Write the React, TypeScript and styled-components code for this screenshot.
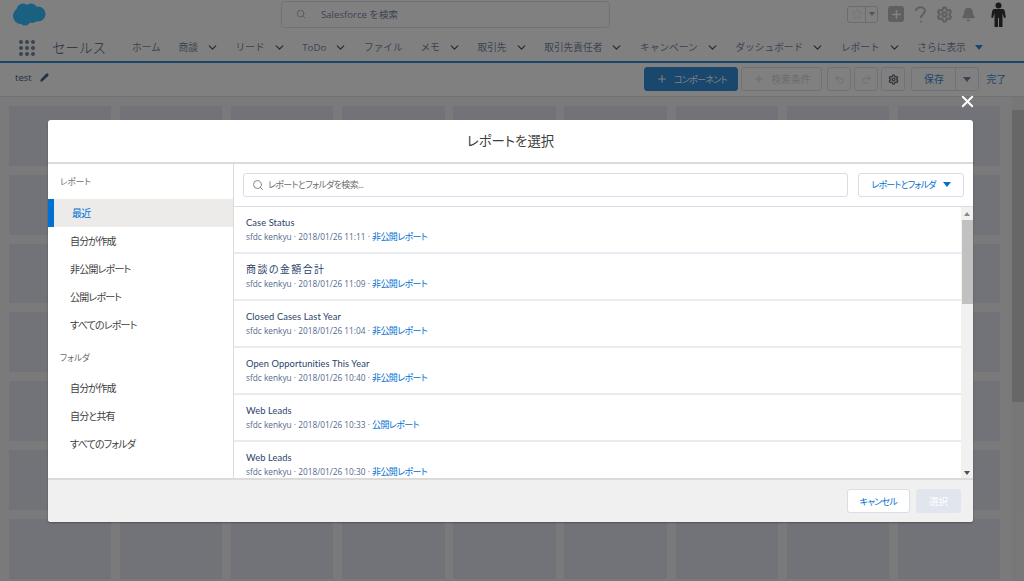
import React from 'react';
import styled, { createGlobalStyle } from 'styled-components';
import { Search, Pencil, Plus, Undo2, Redo2, Settings, ChevronDown, Bell, Star, X } from 'lucide-react';

const FONT = `"Open Sans", "Noto Sans CJK JP", sans-serif`;

const GlobalStyle = createGlobalStyle`
  html, body { margin: 0; padding: 0; }
  body { width: 1024px; height: 581px; overflow: hidden; font-family: ${FONT}; background: #fff; }
  * { box-sizing: border-box; }
`;

const Page = styled.div`
  position: relative;
  width: 1024px;
  height: 581px;
  overflow: hidden;
  display: flex;
  flex-direction: column;
`;

const TopBar = styled.header`
  height: 30px;
  display: flex;
  align-items: center;
  padding: 0 18px 0 12px;
  flex-shrink: 0;
`;

const Logo = styled.svg`
  width: 34px;
  height: 24px;
  margin-top: -2px;
  flex-shrink: 0;
`;

const GlobalSearch = styled.div`
  margin-left: 235px;
  margin-top: -2px;
  width: 329px;
  height: 27px;
  border: 1px solid #d8dde6;
  border-radius: 4px;
  display: flex;
  align-items: center;
  padding-left: 14px;
  gap: 15px;
  font-size: 9.6px;
  color: #54698d;
  background: #fff;
`;

const TopIcons = styled.div`
  margin-left: auto;
  display: flex;
  align-items: center;
  margin-top: -2px;
`;

const Favorite = styled.div`
  width: 31px;
  height: 17px;
  border: 1px solid #c6ccd6;
  border-radius: 3px;
  display: flex;
  align-items: center;
  color: #d8dde6;
  margin-right: 10px;
`;

const FavoriteStar = styled.div`
  width: 18px;
  height: 100%;
  border-right: 1px solid #c6ccd6;
  display: flex;
  align-items: center;
  justify-content: center;
`;

const FavoriteArrow = styled.div`
  flex: 1;
  display: flex;
  justify-content: center;
`;

const Triangle = styled.span<{ $size?: number; $color?: string }>`
  display: inline-block;
  width: 0;
  height: 0;
  flex-shrink: 0;
  border-left: ${p => p.$size ?? 4}px solid transparent;
  border-right: ${p => p.$size ?? 4}px solid transparent;
  border-top: ${p => (p.$size ?? 4) + 1}px solid ${p => p.$color ?? '#6f7f95'};
`;

const TriangleUp = styled.span`
  display: inline-block;
  width: 0;
  height: 0;
  border-left: 3px solid transparent;
  border-right: 3px solid transparent;
  border-bottom: 4px solid #8a8a8a;
`;

const PlusSquare = styled.div`
  width: 16px;
  height: 16px;
  border-radius: 3px;
  background: #b0adab;
  color: #fff;
  display: flex;
  align-items: center;
  justify-content: center;
  margin-right: 10px;
`;

const IconSlot = styled.div<{ $gap: number }>`
  display: flex;
  color: #b0adab;
  margin-right: ${p => p.$gap}px;
`;

const NavBar = styled.nav`
  height: 33px;
  display: flex;
  align-items: center;
  padding: 3px 0 0 19px;
  border-bottom: 2px solid #0070d2;
  flex-shrink: 0;
`;

const Waffle = styled.div`
  display: grid;
  grid-template-columns: repeat(3, 4px);
  grid-auto-rows: 4px;
  gap: 2px;
  margin-right: 17px;
  margin-top: 1px;
`;

const Dot = styled.span`
  border-radius: 50%;
  background: #54698d;
`;

const AppName = styled.div`
  font-size: 13.5px;
  width: 80px;
  color: #16325c;
  white-space: nowrap;
  font-weight: 300;
`;

const NavList = styled.div`
  display: flex;
  align-items: center;
  gap: 17.7px;
`;

const NavItem = styled.div`
  display: flex;
  align-items: center;
  gap: 9px;
  font-size: 9.7px;
  color: #54698d;
  white-space: nowrap;
`;

const Chevron = styled(ChevronDown)`
  width: 13px;
  height: 13px;
  margin: 0 -1px;
  color: #16325c;
`;

const ToolBar = styled.div`
  height: 34px;
  display: flex;
  align-items: center;
  padding: 0 18px 0 15px;
  border-bottom: 1px solid #d8dde6;
  flex-shrink: 0;
`;

const PageName = styled.div`
  display: flex;
  align-items: center;
  gap: 8px;
  font-size: 9.5px;
  color: #16325c;
  margin-top: -4px;
`;

const Actions = styled.div`
  margin-left: auto;
  display: flex;
  align-items: center;
  color: #0070d2;
  font-size: 9.8px;
  font-feature-settings: 'palt';
  margin-top: -1px;
`;

const ToolButton = styled.div<{ $w: number; $gap?: number; $primary?: boolean; $muted?: boolean }>`
  width: ${p => p.$w}px;
  height: 24px;
  margin-right: ${p => p.$gap ?? 3}px;
  border-radius: 3px;
  display: flex;
  align-items: center;
  justify-content: center;
  gap: 6px;
  white-space: nowrap;
  font-size: ${p => (p.$primary ? '9px' : 'inherit')};
  letter-spacing: ${p => (p.$primary ? '-0.65px' : '0')};
  border: 1px solid ${p => (p.$primary ? '#0070d2' : '#d8dde6')};
  background: ${p => (p.$primary ? '#0070d2' : '#fff')};
  color: ${p => (p.$primary ? '#fff' : p.$muted ? '#c9cfd8' : '#0070d2')};
`;

const SaveGroup = styled.div`
  display: flex;
  width: 68px;
  height: 24px;
  border: 1px solid #d8dde6;
  border-radius: 3px;
  margin: 0 7px 0 3px;
`;

const SaveLabel = styled.div`
  width: 44px;
  border-right: 1px solid #d8dde6;
  display: flex;
  align-items: center;
  justify-content: center;
`;

const SaveArrow = styled.div`
  flex: 1;
  display: flex;
  align-items: center;
  justify-content: center;
`;

const Canvas = styled.main`
  flex: 1;
  min-height: 0;
  display: flex;
  background: #f0f0f0;
`;

const Board = styled.div`
  flex: 1;
  overflow: hidden;
  display: grid;
  grid-template-columns: repeat(9, 102.3px);
  grid-auto-rows: 59.8px;
  column-gap: 8.8px;
  row-gap: 9px;
  padding: 9px 0 0 9px;
`;

const BoardCell = styled.div`
  background: #dcdfea;
`;

const PageScrollbar = styled.div`
  width: 12px;
  flex-shrink: 0;
  background: #e9e9e9;
  display: flex;
  flex-direction: column;
  align-items: center;
`;

const PageThumb = styled.div`
  width: 12px;
  height: 292px;
  margin-top: 13px;
  background: #c1c1c1;
`;

const Backdrop = styled.div`
  position: absolute;
  inset: 0;
  background: rgba(44, 44, 44, 0.6);
  padding: 120px 51px 59px 48px;
`;

const Modal = styled.section`
  position: relative;
  height: 402px;
  background: #fff;
  border-radius: 3px;
  display: flex;
  flex-direction: column;
  box-shadow: 0 1px 2px rgba(0, 0, 0, 0.3);
  font-feature-settings: 'palt';
`;

const CloseButton = styled.div`
  position: absolute;
  top: -28px;
  right: -4px;
  color: #fff;
  display: flex;
`;

const ModalTitle = styled.h2`
  margin: 0;
  height: 44px;
  padding-bottom: 2px;
  flex-shrink: 0;
  display: flex;
  align-items: center;
  justify-content: center;
  font-size: 13.4px;
  font-weight: 400;
  color: #3e3e3c;
  border-bottom: 2px solid #dddbda;
`;

const ModalBody = styled.div`
  flex: 1;
  min-height: 0;
  display: flex;
`;

const Sidebar = styled.aside`
  width: 186px;
  flex-shrink: 0;
  border-right: 1px solid #dddbda;
  padding-top: 11px;
`;

const SideHeading = styled.div<{ $top?: number; $bottom: number }>`
  font-size: 8.6px;
  line-height: 14px;
  padding-left: 12px;
  color: #706e6b;
  margin-top: ${p => p.$top ?? 0}px;
  margin-bottom: ${p => p.$bottom}px;
`;

const SideItem = styled.div<{ $active?: boolean }>`
  height: 28px;
  display: flex;
  align-items: center;
  padding-bottom: 1px;
  font-size: 10px;
  letter-spacing: -0.8px;
  padding-left: ${p => (p.$active ? 18 : 22)}px;
  color: ${p => (p.$active ? '#0070d2' : '#3e3e3c')};
  background: ${p => (p.$active ? '#ecebea' : 'transparent')};
  border-left: ${p => (p.$active ? '6px solid #0070d2' : 'none')};
`;

const Content = styled.div`
  flex: 1;
  min-width: 0;
  display: flex;
  flex-direction: column;
`;

const SearchRow = styled.div`
  height: 43px;
  flex-shrink: 0;
  display: flex;
  align-items: center;
  gap: 10px;
  padding: 0 9px 1px;
  border-bottom: 1px solid #d8dde6;
`;

const SearchInput = styled.div`
  flex: 1;
  height: 24px;
  border: 1px solid #d8dde6;
  border-radius: 3px;
  display: flex;
  align-items: center;
  gap: 4px;
  padding-left: 8px;
  font-size: 9px;
  letter-spacing: -0.65px;
  color: #706e6b;
`;

const ScopeButton = styled.div`
  width: 106px;
  height: 24px;
  border: 1px solid #d8dde6;
  border-radius: 3px;
  display: flex;
  align-items: center;
  justify-content: center;
  gap: 7px;
  font-size: 9px;
  letter-spacing: -0.8px;
  color: #0070d2;
  white-space: nowrap;
`;

const ListArea = styled.div`
  flex: 1;
  min-height: 0;
  display: flex;
`;

const ReportList = styled.div`
  flex: 1;
  min-width: 0;
  overflow: hidden;
`;

const ReportRow = styled.div`
  height: 47px;
  padding: 9px 0 0 12px;
  border-bottom: 2px solid #e8ebf1;
`;

const ReportName = styled.div<{ $cjk?: boolean }>`
  font-family: Lato, "Noto Sans CJK JP", sans-serif;
  font-size: ${p => (p.$cjk ? 10 : 9.3)}px;
  letter-spacing: ${p => (p.$cjk ? 1.4 : 0.1)}px;
  line-height: 13px;
  color: #2a4268;
`;

const ReportMeta = styled.div`
  margin-top: 2px;
  font-size: 8.3px;
  line-height: 12px;
  color: #54698d;
  white-space: nowrap;
`;

const FolderLink = styled.span`
  color: #0070d2;
  font-size: 9px;
  letter-spacing: -0.6px;
`;

const ListScrollbar = styled.div`
  width: 12px;
  flex-shrink: 0;
  background: #f1f1f1;
  display: flex;
  flex-direction: column;
  align-items: center;
  padding-top: 5px;
`;

const ListThumb = styled.div`
  width: 11px;
  height: 84px;
  margin-top: 4px;
  background: #c1c1c1;
`;

const ScrollDown = styled.div`
  margin-top: auto;
  margin-bottom: 3px;
  display: flex;
`;

const ModalFooter = styled.footer`
  height: 44px;
  flex-shrink: 0;
  display: flex;
  align-items: center;
  justify-content: flex-end;
  gap: 6px;
  padding: 0 12px 0 0;
  background: #f0f0f0;
  border-top: 2px solid #dddbda;
  border-radius: 0 0 3px 3px;
`;

const FooterButton = styled.div<{ $disabled?: boolean }>`
  height: 24px;
  width: ${p => (p.$disabled ? 45 : 63)}px;
  border-radius: 3px;
  display: flex;
  align-items: center;
  justify-content: center;
  font-size: ${p => (p.$disabled ? 9.6 : 9)}px;
  letter-spacing: ${p => (p.$disabled ? 0 : -0.6)}px;
  color: ${p => (p.$disabled ? '#fff' : '#0070d2')};
  background: ${p => (p.$disabled ? '#e0e5ee' : '#fff')};
  border: 1px solid ${p => (p.$disabled ? '#e0e5ee' : '#d8dde6')};
`;

const navItems: { label: string; menu?: boolean }[] = [
  { label: 'ホーム' },
  { label: '商談', menu: true },
  { label: 'リード', menu: true },
  { label: 'ToDo', menu: true },
  { label: 'ファイル' },
  { label: 'メモ', menu: true },
  { label: '取引先', menu: true },
  { label: '取引先責任者', menu: true },
  { label: 'キャンペーン', menu: true },
  { label: 'ダッシュボード', menu: true },
  { label: 'レポート', menu: true },
];

const reports = [
  { name: 'Case Status', time: '11:11', folder: '非公開レポート' },
  { name: '商談の金額合計', cjk: true, time: '11:09', folder: '非公開レポート' },
  { name: 'Closed Cases Last Year', time: '11:04', folder: '非公開レポート' },
  { name: 'Open Opportunities This Year', time: '10:40', folder: '非公開レポート' },
  { name: 'Web Leads', time: '10:33', folder: '公開レポート' },
  { name: 'Web Leads', time: '10:30', folder: '非公開レポート' },
];

const App: React.FC = () => {
  return (
    <>
      <GlobalStyle />
      <Page>
        <TopBar>
          <Logo viewBox="0 0 34 24">
            <g fill="#00b0ff">
              <circle cx="9" cy="14" r="8" />
              <circle cx="11" cy="8" r="6.5" />
              <circle cx="19" cy="8" r="6.5" />
              <circle cx="26" cy="12" r="7.5" />
              <circle cx="13" cy="18" r="5.5" />
              <circle cx="20" cy="15" r="6" />
            </g>
          </Logo>
          <GlobalSearch>
            <Search size={10} color="#8a94a3" />
            <span>Salesforce を検索</span>
          </GlobalSearch>
          <TopIcons>
            <Favorite>
              <FavoriteStar>
                <Star size={12} strokeWidth={1.5} />
              </FavoriteStar>
              <FavoriteArrow>
                <Triangle $size={3} $color="#8a94a3" />
              </FavoriteArrow>
            </Favorite>
            <PlusSquare>
              <Plus size={13} strokeWidth={3} />
            </PlusSquare>
            <IconSlot $gap={9}>
              <svg width="13" height="17" viewBox="0 0 13 17" fill="none" stroke="currentColor" strokeWidth="2">
                <path d="M2 5c0-5 9-5 9 0 0 3-4 3-4 7" />
                <circle cx="7" cy="15.5" r="1" fill="currentColor" stroke="none" />
              </svg>
            </IconSlot>
            <IconSlot $gap={8}>
              <Settings size={17} strokeWidth={3} />
            </IconSlot>
            <IconSlot $gap={15}>
              <Bell size={15} fill="currentColor" />
            </IconSlot>
            <svg width="15" height="25" viewBox="0 0 15 25" fill="#000">
              <circle cx="7.5" cy="3.5" r="3" />
              <path d="M3.500 7h8c1.200 0 2 .8 2.300 2l1 6.500-1.800.4-1.500-5v14.100H8v-9H7v9H3.500V10.900l-1.500 5-1.800-.4 1-6.500C1.500 7.800 2.300 7 3.500 7z" />
            </svg>
          </TopIcons>
        </TopBar>

        <NavBar>
          <Waffle>
            {Array.from({ length: 9 }).map((_, i) => (
              <Dot key={i} />
            ))}
          </Waffle>
          <AppName>セールス</AppName>
          <NavList>
            {navItems.map(item => (
              <NavItem key={item.label}>
                {item.label}
                {item.menu && <Chevron strokeWidth={2.4} />}
              </NavItem>
            ))}
            <NavItem>
              さらに表示
              <Triangle $color="#0070d2" />
            </NavItem>
          </NavList>
        </NavBar>

        <ToolBar>
          <PageName>
            test
            <Pencil size={9} fill="currentColor" />
          </PageName>
          <Actions>
            <ToolButton $w={94} $primary>
              <Plus size={12} />
              コンポーネント
            </ToolButton>
            <ToolButton $w={81} $gap={5} $muted>
              <Plus size={12} />
              検索条件
            </ToolButton>
            <ToolButton $w={24} $muted>
              <Undo2 size={11} />
            </ToolButton>
            <ToolButton $w={24} $muted>
              <Redo2 size={11} />
            </ToolButton>
            <ToolButton $w={24} $gap={3}>
              <Settings size={11} color="#3e4a5a" strokeWidth={3} />
            </ToolButton>
            <SaveGroup>
              <SaveLabel>保存</SaveLabel>
              <SaveArrow>
                <Triangle $color="#54698d" />
              </SaveArrow>
            </SaveGroup>
            完了
          </Actions>
        </ToolBar>

        <Canvas>
          <Board>
            {Array.from({ length: 63 }).map((_, i) => (
              <BoardCell key={i} />
            ))}
          </Board>
          <PageScrollbar>
            <PageThumb />
          </PageScrollbar>
        </Canvas>

        <Backdrop>
          <Modal>
            <CloseButton>
              <X size={19} strokeWidth={2.4} />
            </CloseButton>
            <ModalTitle>レポートを選択</ModalTitle>
            <ModalBody>
              <Sidebar>
                <SideHeading $bottom={10}>レポート</SideHeading>
                <SideItem $active>最近</SideItem>
                <SideItem>自分が作成</SideItem>
                <SideItem>非公開レポート</SideItem>
                <SideItem>公開レポート</SideItem>
                <SideItem>すべてのレポート</SideItem>
                <SideHeading $top={12} $bottom={9}>フォルダ</SideHeading>
                <SideItem>自分が作成</SideItem>
                <SideItem>自分と共有</SideItem>
                <SideItem>すべてのフォルダ</SideItem>
              </Sidebar>
              <Content>
                <SearchRow>
                  <SearchInput>
                    <Search size={12} color="#8a8886" />
                    レポートとフォルダを検索...
                  </SearchInput>
                  <ScopeButton>
                    レポートとフォルダ
                    <Triangle $color="#0070d2" />
                  </ScopeButton>
                </SearchRow>
                <ListArea>
                  <ReportList>
                    {reports.map((report, i) => (
                      <ReportRow key={i}>
                        <ReportName $cjk={report.cjk}>{report.name}</ReportName>
                        <ReportMeta>
                          sfdc kenkyu · 2018/01/26 {report.time} ·{' '}
                          <FolderLink>{report.folder}</FolderLink>
                        </ReportMeta>
                      </ReportRow>
                    ))}
                  </ReportList>
                  <ListScrollbar>
                    <TriangleUp />
                    <ListThumb />
                    <ScrollDown>
                      <Triangle $size={3} $color="#505050" />
                    </ScrollDown>
                  </ListScrollbar>
                </ListArea>
              </Content>
            </ModalBody>
            <ModalFooter>
              <FooterButton>キャンセル</FooterButton>
              <FooterButton $disabled>選択</FooterButton>
            </ModalFooter>
          </Modal>
        </Backdrop>
      </Page>
    </>
  );
};

export default App;
